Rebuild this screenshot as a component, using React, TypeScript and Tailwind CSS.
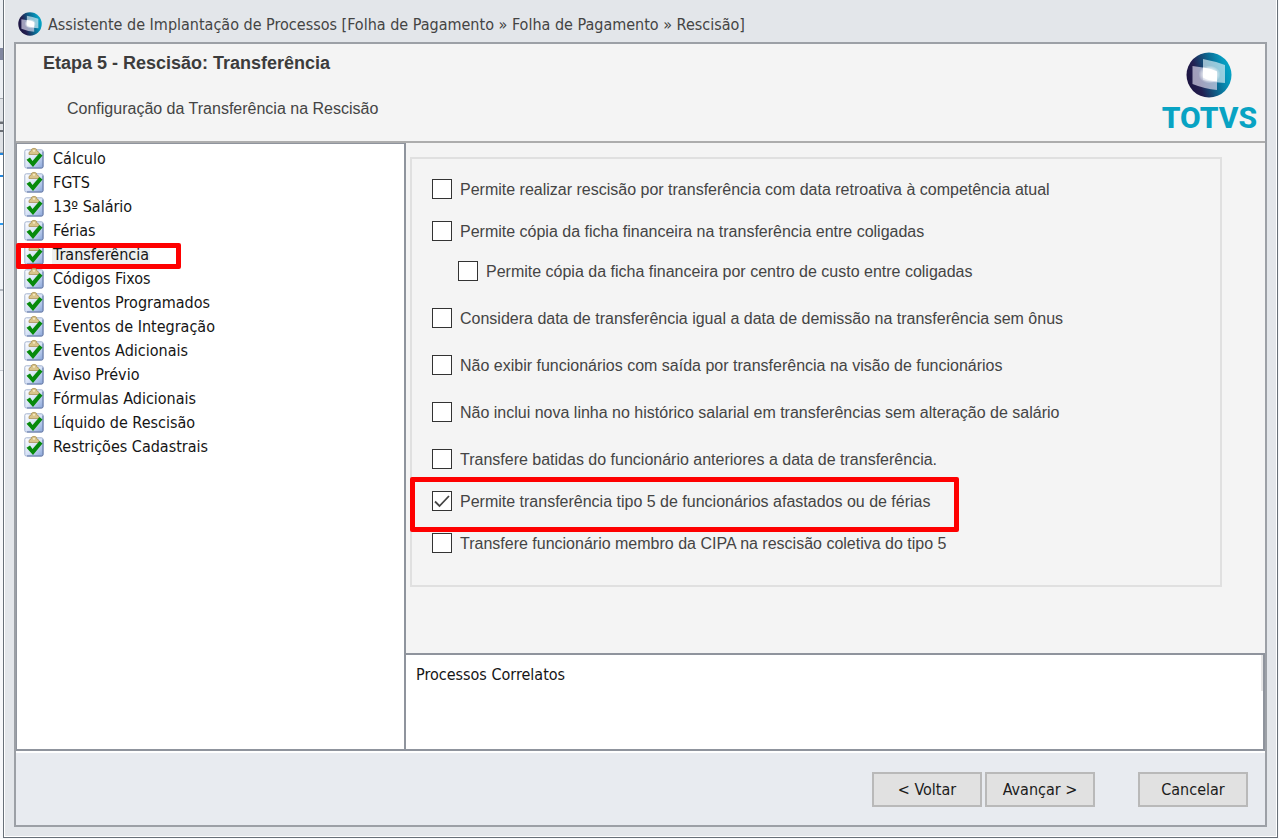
import React from "react";

type Step = { label: string; current?: boolean };
type Option = { id: string; label: string; gap: string; indent?: boolean; checked?: boolean; marked?: boolean };

const steps: Step[] = [
  { label: "Cálculo" },
  { label: "FGTS" },
  { label: "13º Salário" },
  { label: "Férias" },
  { label: "Transferência", current: true },
  { label: "Códigos Fixos" },
  { label: "Eventos Programados" },
  { label: "Eventos de Integração" },
  { label: "Eventos Adicionais" },
  { label: "Aviso Prévio" },
  { label: "Fórmulas Adicionais" },
  { label: "Líquido de Rescisão" },
  { label: "Restrições Cadastrais" },
];

const options: Option[] = [
  { id: "retroativa", gap: "mt-0", label: "Permite realizar rescisão por transferência com data retroativa à competência atual" },
  { id: "ficha", gap: "mt-[22px]", label: "Permite cópia da ficha financeira na transferência entre coligadas" },
  { id: "centro-custo", gap: "mt-5", indent: true, label: "Permite cópia da ficha financeira por centro de custo entre coligadas" },
  { id: "sem-onus", gap: "mt-[27px]", label: "Considera data de transferência igual a data de demissão na transferência sem ônus" },
  { id: "visao", gap: "mt-[27px]", label: "Não exibir funcionários com saída por transferência na visão de funcionários" },
  { id: "historico", gap: "mt-[27px]", label: "Não inclui nova linha no histórico salarial em transferências sem alteração de salário" },
  { id: "batidas", gap: "mt-[27px]", label: "Transfere batidas do funcionário anteriores a data de transferência." },
  { id: "tipo5", gap: "mt-[22px]", checked: true, marked: true, label: "Permite transferência tipo 5 de funcionários afastados ou de férias" },
  { id: "cipa", gap: "mt-[22px]", label: "Transfere funcionário membro da CIPA na rescisão coletiva do tipo 5" },
];

function Sphere({ id, className }: { id: string; className: string }) {
  return (
    <svg viewBox="0 0 46 46" className={className} aria-hidden="true">
      <defs>
        <linearGradient id={`${id}-ball`} x1="0" y1="0.65" x2="1" y2="0.35">
          <stop offset="0" stopColor="#1c1440" />
          <stop offset="0.25" stopColor="#231f50" />
          <stop offset="0.6" stopColor="#0b6a92" />
          <stop offset="0.85" stopColor="#0698bd" />
          <stop offset="1" stopColor="#07a6c6" />
        </linearGradient>
        <radialGradient id={`${id}-glow`}>
          <stop offset="0.4" stopColor="#ffffff" />
          <stop offset="1" stopColor="#ffffff" stopOpacity="0" />
        </radialGradient>
      </defs>
      <circle cx="23" cy="23" r="22.5" fill={`url(#${id}-ball)`} />
      <path d="M17 7q11 2 22 6v18q-11 0-22-3z" fill="#d3e9f2" fillOpacity="0.7" />
      <path d="M6.500 14q12 1 24.500 5v19q-12-1-24.500-6z" fill="#d9d6ea" fillOpacity="0.7" />
      <path d="M17 15.500q7 .5 14 4v10q-8-.5-14-4z" fill="#ffffff" />
      <ellipse cx="23.500" cy="22.500" rx="11" ry="9" fill={`url(#${id}-glow)`} />
    </svg>
  );
}

function ClipboardCheck() {
  return (
    <svg viewBox="0 0 20 22" className="h-[22px] w-5 shrink-0" aria-hidden="true">
      <defs>
        <linearGradient id="sheet" x1="0" y1="0" x2="1" y2="1">
          <stop offset="0" stopColor="#ffffff" />
          <stop offset="0.5" stopColor="#d8e3f7" />
          <stop offset="1" stopColor="#86a3d8" />
        </linearGradient>
      </defs>
      <rect x="0.800" y="2.800" width="18.200" height="18.200" rx="1.500" fill="url(#sheet)" stroke="#a3b2cf" />
      <path d="M19 4.500v15q0 1.500-1.500 1.500H3" fill="none" stroke="#5f74a5" />
      <path d="M5 7.500V6q0-1.500 2-1.800Q7 1.300 10 1.300t3 2.900q2 .3 2 1.800v1.500z" fill="#d9c48a" stroke="#ab9358" strokeWidth="0.8" />
      <circle cx="10" cy="3.800" r="0.900" fill="#fff6d8" />
      <path d="M2.500 12.700l3.500-2.200 2.500 3.500L15.500 6l3 2.500L9 20z" fill="#078a0c" />
    </svg>
  );
}

function Highlight({ className }: { className: string }) {
  return <span aria-hidden="true" className={`pointer-events-none absolute rounded-[2px] border-[5px] border-[#fe0000] ${className}`} />;
}

function OptionRow({ option }: { option: Option }) {
  return (
    <div className={`relative flex h-5 items-center ${option.gap} ${option.indent ? "ml-[26px]" : ""}`}>
      <span className="relative flex">
        <input
          id={option.id}
          type="checkbox"
          defaultChecked={option.checked}
          className="peer size-5 appearance-none border border-[#333333] bg-white"
        />
        <svg viewBox="0 0 20 20" className="pointer-events-none absolute inset-0 hidden size-5 peer-checked:block" aria-hidden="true">
          <path d="M3 10.500l4.500 4.500L17 5" fill="none" stroke="#444" strokeWidth="1.800" />
        </svg>
      </span>
      <label htmlFor={option.id} className="pt-[2px] pl-2 whitespace-nowrap">{option.label}</label>
      {option.marked && <Highlight className="-top-[14px] -left-[22px] h-[55px] w-[549px]" />}
    </div>
  );
}

const buttonClass = "h-[35px] w-[110px] border-2 border-[#b9b9b9] bg-[#e1e1e1] pt-[2px] text-base leading-5 text-[#1c1c1c]";

export default function App() {
  return (
    <div className="flex min-h-screen bg-[#f7f8fa] font-['DejaVu_Sans_Condensed','Noto_Sans',sans-serif] text-[#444444]">
      <div aria-hidden="true" className="flex w-[3px] shrink-0 flex-col">
        <div className="h-12 bg-[#edf0f4]" />
        <div className="h-3 bg-[#8187a0]" />
        <div className="h-[38px] bg-[#edf0f4]" />
        <div className="h-6 border-y border-[#a9adb3] bg-[#e1e4e8]" />
        <div className="h-[10px] border-y-2 border-[#6b6f75] bg-[#e1e4e8]" />
        <div className="h-[21px] border-b border-[#a9adb3] bg-[#dfe2e6]" />
        <div className="h-[24px] border-y-2 border-[#2286dd] bg-white" />
        <div className="h-[48px] border-b-2 border-[#2e9bf0] bg-white" />
        <div className="h-[66px] border-b-2 border-[#b5bac2] bg-[#f0f3f7]" />
        <div className="h-[80px] border-b border-[#c9cdd4] bg-[#eef0f4]" />
      </div>
      <main className="mr-px mb-px flex min-w-0 flex-1 flex-col border border-t-0 border-[#687078] bg-[#e3e6ea] px-[10px] pb-[10px] shadow-[inset_1px_0_0_#ffffff,inset_-1px_0_0_#ffffff,inset_0_-1px_0_#ffffff]">
        <header className="flex h-[42px] items-center gap-[6px] pt-[6px] pl-1">
          <Sphere id="title-mark" className="size-6" />
          <h1 className="pt-[2px] text-base">Assistente de Implantação de Processos [Folha de Pagamento » Folha de Pagamento » Rescisão]</h1>
        </header>
        <div className="flex flex-1 flex-col border-2 border-[#9ca0a6] bg-[#f4f4f4]">
          <section className="flex h-[99px] shrink-0 justify-between border-b-2 border-[#adadad] pr-2 pl-[27px] font-['Liberation_Sans',sans-serif]">
            <div>
              <h2 className="pt-[7px] text-lg leading-6 font-bold text-[#3c3c3c]">Etapa 5 - Rescisão: Transferência</h2>
              <p className="pt-[22px] pl-6 text-base leading-6">Configuração da Transferência na Rescisão</p>
            </div>
            <div className="flex flex-col items-center pt-2">
              <Sphere id="brand-mark" className="size-[46px]" />
              <span className="pt-1 font-['Roboto',sans-serif] text-[30px] leading-8 font-extrabold text-[#08a3c3]">TOTVS</span>
            </div>
          </section>
          <div className="flex min-h-[608px] flex-1">
            <nav className="w-[390px] shrink-0 border-t border-r-2 border-b-2 border-l border-[#8f949d] bg-white pt-[2px] pl-[7px]">
              <ul>
                {steps.map((step) => (
                  <li key={step.label} className="relative flex h-6 items-center gap-2 text-base leading-5">
                    <ClipboardCheck />
                    <a href="#" aria-current={step.current ? "step" : undefined} className={step.current ? "bg-[#efefef] px-px pt-px text-[#151515]" : "px-px pt-px text-[#151515]"}>
                      {step.label}
                    </a>
                    {step.current && <Highlight className="top-px -left-2 h-[26px] w-[165px]" />}
                  </li>
                ))}
              </ul>
            </nav>
            <div className="flex min-w-0 flex-1 flex-col">
              <div className="flex-1 pt-[14px] pr-[43px] pl-1">
                <fieldset className="h-[430px] border-2 border-[#e0e0e0] pt-[20px] pl-5 font-['Liberation_Sans',sans-serif] text-base">
                  {options.map((option) => (
                    <OptionRow key={option.id} option={option} />
                  ))}
                </fieldset>
              </div>
              <section className="flex h-[98px] justify-between border-2 border-l-0 border-[#8f949d] bg-white">
                <h3 className="pt-2 pl-[10px] text-base leading-6 text-[#151515]">Processos Correlatos</h3>
                <div className="h-9 w-[2px] bg-[#e6e6e6]" />
              </section>
            </div>
          </div>
          <footer className="flex h-[74px] items-center justify-end border-t-2 border-white bg-[#e8ebf0] pr-[17px]">
            <button type="button" className={buttonClass}>&lt; Voltar</button>
            <button type="button" className={`ml-[3px] ${buttonClass}`}>Avançar &gt;</button>
            <button type="button" className={`ml-[43px] ${buttonClass}`}>Cancelar</button>
          </footer>
        </div>
      </main>
    </div>
  );
}
